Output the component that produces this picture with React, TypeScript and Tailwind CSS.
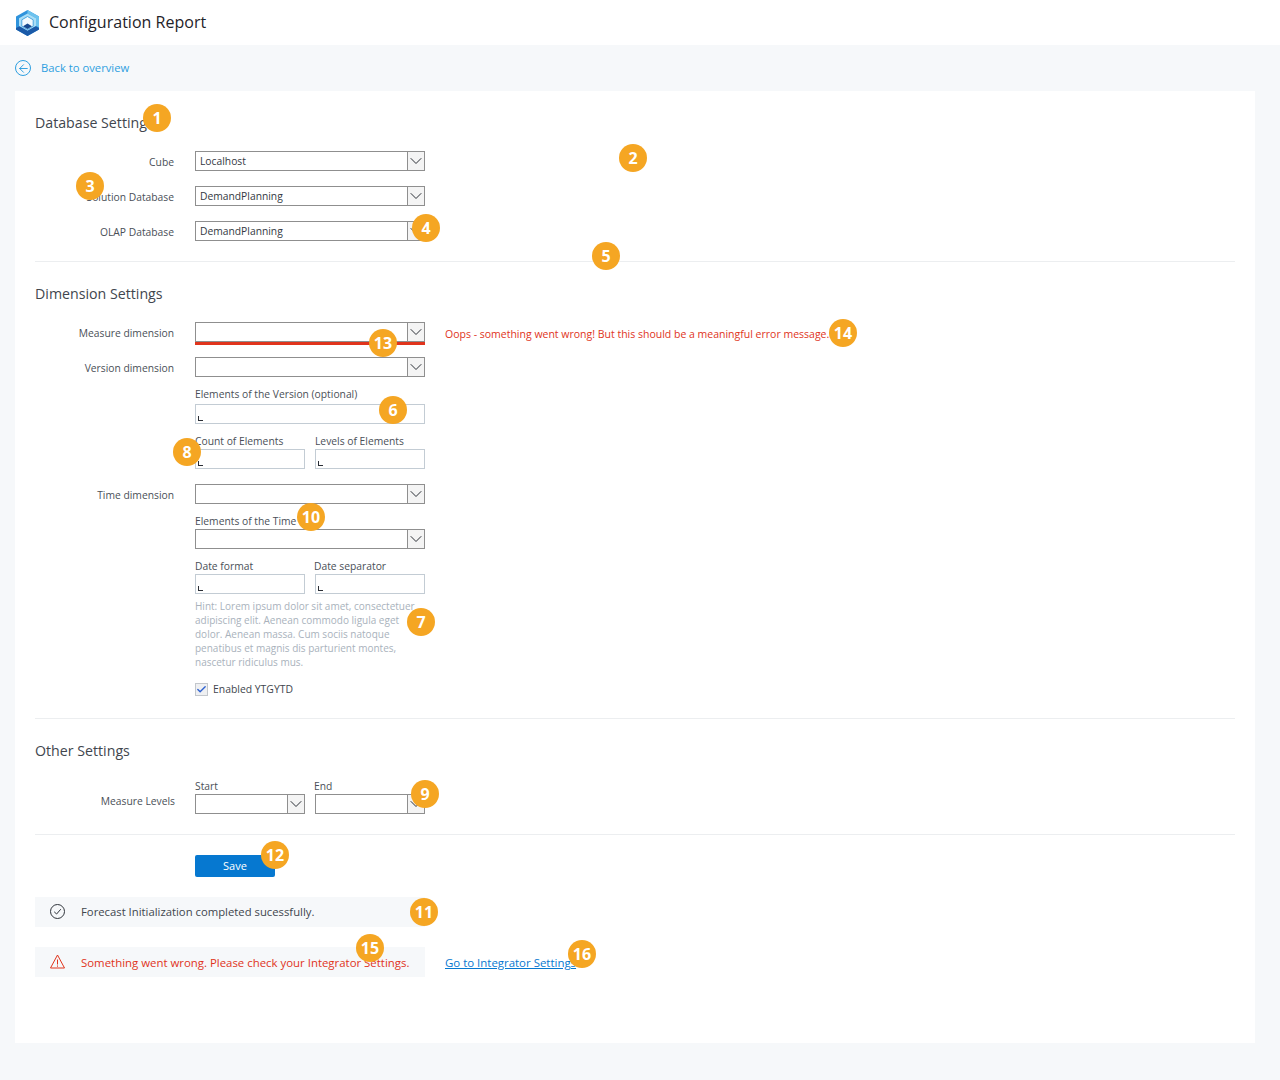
import { ArrowLeft, Check, ChevronDown } from 'lucide-react';

const badges = [
  { n: 1, x: 157, y: 118 },
  { n: 2, x: 633, y: 158 },
  { n: 3, x: 90, y: 186 },
  { n: 4, x: 426, y: 228 },
  { n: 5, x: 606, y: 256 },
  { n: 6, x: 393, y: 410 },
  { n: 7, x: 421, y: 622 },
  { n: 8, x: 187, y: 452 },
  { n: 9, x: 425, y: 794 },
  { n: 10, x: 311, y: 517 },
  { n: 11, x: 424, y: 912 },
  { n: 12, x: 275, y: 855 },
  { n: 13, x: 383, y: 343 },
  { n: 14, x: 843, y: 333 },
  { n: 15, x: 370, y: 948 },
  { n: 16, x: 582, y: 954 },
];

function Select({ value = '', width = 'w-[230px]' }: { value?: string; width?: string }) {
  return (
    <div className={`flex h-5 ${width} border border-[#8f8f8f] bg-white`}>
      <div className="flex-1 pl-1 text-[10.3px] leading-[18px] text-[#33383f]">{value}</div>
      <div className="flex w-[17px] items-center justify-center border-l border-[#8f8f8f] bg-[#f4f4f4]">
        <ChevronDown size={20} strokeWidth={1.2} className="shrink-0 text-[#2b2f36]" />
      </div>
    </div>
  );
}

function TextInput({ width }: { width: string }) {
  return (
    <div className={`relative h-5 ${width} border border-[#c3ccd4] bg-white`}>
      <span className="absolute bottom-[2px] left-[2px] h-[5px] w-[5px] border-b border-l border-[#2b2f36]" />
    </div>
  );
}

function Row({ label, children }: { label: string; children: React.ReactNode }) {
  return (
    <div className="flex items-start">
      <div className="h-5 w-[139px] text-right text-[10.3px] leading-[22px] text-[#4a4f57]">{label}</div>
      <div className="ml-[21px]">{children}</div>
    </div>
  );
}

function FieldLabel({ children }: { children: React.ReactNode }) {
  return <div className="h-[14px] text-[10.3px] leading-[14px] text-[#4a4f57]">{children}</div>;
}

function Heading({ children }: { children: React.ReactNode }) {
  return <h2 className="text-[14.2px] font-normal leading-5 text-[#41464e]">{children}</h2>;
}

export default function App() {
  return (
    <div className="relative h-[1080px] bg-[#f6f8fa] font-['Open_Sans',sans-serif]">
      {/* Top bar */}
      <header className="flex h-[45px] items-center bg-white pl-[16px]">
        <svg width="23" height="26" viewBox="0 0 23 26">
          <path d="M11.500 0 23 6.500v13L11.500 26 0 19.500v-13z" fill="#2f93dc" />
          <path d="M11.500 0 23 6.500v11l-3-1.700V8.300l-8.500-4.800z" fill="#6cc2ee" />
          <path d="M11.500 3.500 20 8.300v8l-8.500 4.800L3 16.300v-8z" fill="#a9def6" />
          <path d="M11.500 6.500 17.200 9.800v6.400l-5.700 3.300-5.700-3.300V9.800z" fill="#f2fafe" stroke="#4aa5e0" strokeWidth="1" />
          <path d="M0 18 3.500 16.300l8 4.500 8-4.500L23 18v1.500L11.500 26 0 19.500z" fill="#1b5aa8" />
          <path d="M11.500 13.500 16 16.200 11.500 18.900 7 16.200z" fill="#17498f" />
        </svg>
        <span className="ml-[10px] -translate-y-px text-[16px] tracking-[0.03px] text-[#1f2329]">Configuration Report</span>
      </header>

      {/* Back link */}
      <div className="flex h-[46px] items-center pl-[15px]">
        <span className="flex h-4 w-4 items-center justify-center rounded-full border border-[#2e9fe0]">
          <ArrowLeft size={13} strokeWidth={1.8} className="text-[#2e9fe0]" />
        </span>
        <span className="ml-[10px] text-[11.250px] text-[#2e9fe0]">Back to overview</span>
      </div>

      {/* Card */}
      <main className="ml-[15px] h-[952px] w-[1240px] bg-white px-5 pt-[22px]">
        <Heading>Database Settings</Heading>
        <div className="mt-[18px] flex flex-col gap-[15px]">
          <Row label="Cube"><Select value="Localhost" /></Row>
          <Row label="Solution Database"><Select value="DemandPlanning" /></Row>
          <Row label="OLAP Database"><Select value="DemandPlanning" /></Row>
        </div>
        <div className="mt-5 border-t border-[#eceef0]" />

        <div className="mt-[22px]"><Heading>Dimension Settings</Heading></div>
        <div className="mt-[18px]">
          <Row label="Measure dimension">
            <Select />
            <div className="h-[3px] w-[230px] bg-[#e0341c]" />
          </Row>
          <div className="absolute left-[445px] top-[326px] text-[10.5px] leading-[16px] text-[#e0341c]">
            Oops - something went wrong! But this should be a meaningful error message.
          </div>
        </div>
        <div className="mt-3">
          <Row label="Version dimension">
            <Select />
            <div className="mt-[10px]"><FieldLabel>Elements of the Version (optional)</FieldLabel></div>
            <div className="mt-[3px]"><TextInput width="w-[230px]" /></div>
            <div className="mt-[10px] flex gap-[10px]">
              <div>
                <FieldLabel>Count of Elements</FieldLabel>
                <div className="mt-[1px]"><TextInput width="w-[110px]" /></div>
              </div>
              <div>
                <FieldLabel>Levels of Elements</FieldLabel>
                <div className="mt-[1px]"><TextInput width="w-[110px]" /></div>
              </div>
            </div>
          </Row>
        </div>
        <div className="mt-[15px]">
          <Row label="Time dimension">
            <Select />
            <div className="mt-[10px]"><FieldLabel>Elements of the Time</FieldLabel></div>
            <div className="mt-[1px]"><Select /></div>
            <div className="mt-[10px] flex gap-[10px]">
              <div>
                <FieldLabel>Date format</FieldLabel>
                <div className="mt-[1px]"><TextInput width="w-[110px]" /></div>
              </div>
              <div>
                <div className="-ml-px"><FieldLabel>Date separator</FieldLabel></div>
                <div className="mt-[1px]"><TextInput width="w-[110px]" /></div>
              </div>
            </div>
            <p className="mt-[5px] w-[230px] text-[10px] leading-[14px] text-[#a9b2bc]">
              Hint: Lorem ipsum dolor sit amet, consectetuer adipiscing elit. Aenean commodo ligula eget dolor. Aenean massa. Cum sociis natoque penatibus et magnis dis parturient montes, nascetur ridiculus mus.
            </p>
            <div className="mt-[13px] flex items-center">
              <span className="flex h-[13px] w-[13px] items-center justify-center border border-[#c3c7cc] bg-[#eff0f2]">
                <Check size={11} strokeWidth={3} className="text-[#2f62d0]" />
              </span>
              <span className="ml-[5px] text-[10.4px] leading-[14px] text-[#41464e]">Enabled YTGYTD</span>
            </div>
          </Row>
        </div>
        <div className="mt-[22px] border-t border-[#eceef0]" />

        <div className="mt-[22px]"><Heading>Other Settings</Heading></div>
        <div className="mt-[18px] flex items-start">
          <div className="w-[140px] pt-[15px] text-right text-[10.3px] leading-[14px] text-[#4a4f57]">Measure Levels</div>
          <div className="ml-[20px] flex gap-[10px]">
            <div>
              <FieldLabel>Start</FieldLabel>
              <div className="mt-[1px]"><Select width="w-[110px]" /></div>
            </div>
            <div>
              <div className="-ml-px"><FieldLabel>End</FieldLabel></div>
              <div className="mt-[1px]"><Select width="w-[110px]" /></div>
            </div>
          </div>
        </div>
        <div className="mt-5 border-t border-[#eceef0]" />

        <button type="button" className="ml-[160px] mt-5 block h-[22px] w-20 rounded-[2px] bg-[#0678d0] text-[11px] text-white">
          Save
        </button>

        {/* Status messages */}
        <div className="mt-5 flex h-[30px] w-[390px] items-center bg-[#f6f8fa] pl-[15px]">
          <svg width="15" height="15" viewBox="0 0 15 15" fill="none" stroke="#2f343b" strokeWidth="1" className="-mt-[2px]">
            <circle cx="7.500" cy="7.500" r="7" />
            <path d="M4.200 7.800 6.600 10l4.200-4.800" />
          </svg>
          <span className="ml-[16px] pt-[1px] text-[11.3px] text-[#41464e]">Forecast Initialization completed sucessfully.</span>
        </div>
        <div className="mt-5 flex items-center">
          <div className="flex h-[30px] w-[390px] items-center bg-[#f6f8fa] pl-[15px]">
            <svg width="15" height="15" viewBox="0 0 15 15" fill="none" stroke="#e0341c" strokeWidth="1" className="-mt-[2px]">
              <path d="M7.500 1 14.500 14H.5z" />
              <path d="M7.500 5.500v5M7.500 11.500v1.200" />
            </svg>
            <span className="ml-[16px] pt-[1px] text-[11.420px] text-[#e0341c]">Something went wrong. Please check your Integrator Settings.</span>
          </div>
          <a href="#" className="ml-5 pt-[1px] text-[11.450px] text-[#0678d0] underline">Go to Integrator Settings</a>
        </div>
      </main>

      {/* Annotation markers */}
      {badges.map((b) => (
        <span
          key={b.n}
          className="absolute flex h-7 w-7 items-center justify-center rounded-full bg-[#f5a623] text-[16px] font-bold text-white"
          style={{ left: b.x - 14, top: b.y - 14 }}
        >
          {b.n}
        </span>
      ))}
    </div>
  );
}
